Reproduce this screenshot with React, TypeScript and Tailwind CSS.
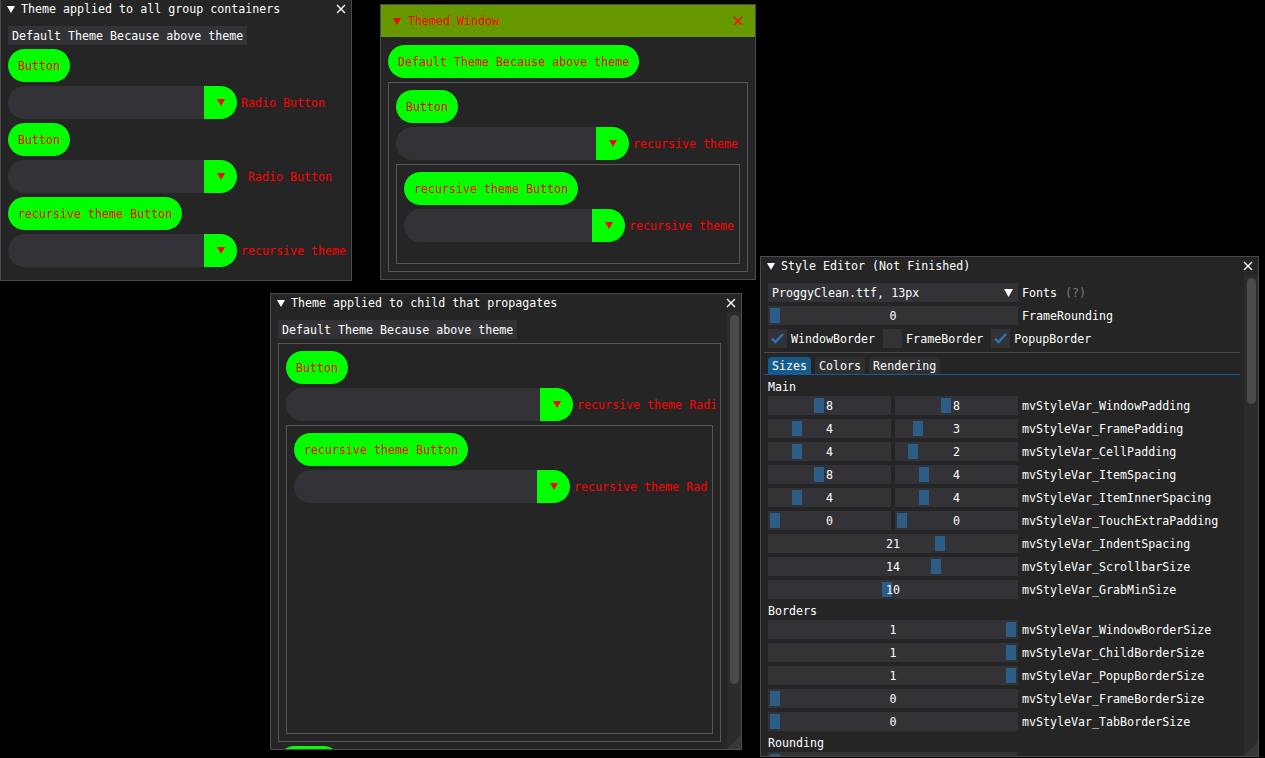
import React from 'react';

const Tri = ({ c = '#ffffff', w = 8, h = 7 }: { c?: string; w?: number; h?: number }) => (
  <svg width={w} height={h} viewBox={`0 0 ${w} ${h}`} className="shrink-0">
    <polygon points={`0,0 ${w},0 ${w / 2},${h}`} fill={c} />
  </svg>
);

const Close = ({ c = '#ffffff' }: { c?: string }) => (
  <svg width="10" height="10" viewBox="0 0 10 10" className="shrink-0">
    <path d="M1 1L9 9M9 1L1 9" stroke={c} strokeWidth="1.4" />
  </svg>
);

const Check = () => (
  <svg width="19" height="19" viewBox="0 0 19 19">
    <path d="M4 9.5L7.5 13L15 5" stroke="#2a74b4" strokeWidth="2.4" fill="none" />
  </svg>
);

function Win({ cls, title, themed, children }: { cls: string; title: string; themed?: boolean; children: React.ReactNode }) {
  return (
    <div className={`absolute flex flex-col overflow-hidden bg-[#252526] border border-[#4a4a4e] ${cls}`}>
      {themed ? (
        <div className="h-[32px] shrink-0 bg-[#669900] flex items-center pl-[12px] pr-[12px] text-[#ff0000]">
          <Tri c="#ff0000" />
          <span className="ml-[7px]">{title}</span>
          <span className="ml-auto">
            <Close c="#ff0000" />
          </span>
        </div>
      ) : (
        <div className="h-[18px] shrink-0 flex items-center pl-[6px] pr-[5px] text-white">
          <Tri />
          <span className="ml-[6px]">{title}</span>
          <span className="ml-auto">
            <Close />
          </span>
        </div>
      )}
      {children}
    </div>
  );
}

function Label({ text }: { text: string }) {
  return (
    <div className="h-[19px] px-[4px] shrink-0 self-start bg-[#333337] text-white flex items-center whitespace-pre">
      <span className="translate-y-[1px]">{text}</span>
    </div>
  );
}

function GBtn({ text }: { text: string }) {
  return (
    <div className="h-[33px] px-[10px] shrink-0 self-start rounded-full bg-[#00ff00] text-[#ff0000] flex items-center whitespace-pre">
      <span className="translate-y-[1px]">{text}</span>
    </div>
  );
}

function GCombo({ w, label }: { w: string; label: string }) {
  return (
    <div className="flex items-center shrink-0 whitespace-pre">
      <div className={`flex h-[33px] shrink-0 ${w}`}>
        <div className="flex-1 bg-[#333337] rounded-l-full" />
        <div className="w-[33px] bg-[#00ff00] rounded-r-full flex items-center justify-center">
          <Tri c="#ff0000" w={8} h={7} />
        </div>
      </div>
      <span className="ml-[4px] text-[#ff0000] translate-y-[1px]">{label}</span>
    </div>
  );
}

// child window: border box, content clipped a little inside the right edge
function Child({ cls, children }: { cls: string; children: React.ReactNode }) {
  return (
    <div className={`shrink-0 border border-[#56565a] flex pl-[7px] pt-[7px] pr-[4px] ${cls}`}>
      <div className="flex-1 min-w-0 overflow-hidden flex flex-col gap-[4px]">{children}</div>
    </div>
  );
}

function Scroll({ grab }: { grab: string }) {
  return (
    <div className="relative w-[14px] shrink-0 bg-[#2c2c2f] pt-[3px] pl-[3px] pr-[2px]">
      <div className={`w-[9px] rounded-full bg-[#4a4a4d] ${grab}`} />
    </div>
  );
}

function Grip() {
  return (
    <svg width="14" height="14" viewBox="0 0 14 14" className="absolute right-0 bottom-0">
      <polygon points="14,0 14,14 0,14" fill="#37373b" />
    </svg>
  );
}

function Slider({ w, grab, value }: { w: string; grab: number; value: string }) {
  return (
    <div className={`relative h-[19px] shrink-0 bg-[#333337] flex items-center justify-center ${w}`}>
      <div className="absolute top-[2px] w-[10px] h-[15px] bg-[#2c5d87]" style={{ left: grab }} />
      <span className="relative text-white translate-y-[1px]">{value}</span>
    </div>
  );
}

const pairs: { name: string; a: [number, string]; b: [number, string] }[] = [
  { name: 'mvStyleVar_WindowPadding', a: [46, '8'], b: [46, '8'] },
  { name: 'mvStyleVar_FramePadding', a: [24, '4'], b: [18, '3'] },
  { name: 'mvStyleVar_CellPadding', a: [24, '4'], b: [13, '2'] },
  { name: 'mvStyleVar_ItemSpacing', a: [46, '8'], b: [24, '4'] },
  { name: 'mvStyleVar_ItemInnerSpacing', a: [24, '4'], b: [24, '4'] },
  { name: 'mvStyleVar_TouchExtraPadding', a: [2, '0'], b: [2, '0'] },
];

const singles: { name: string; grab: number; value: string }[] = [
  { name: 'mvStyleVar_IndentSpacing', grab: 167, value: '21' },
  { name: 'mvStyleVar_ScrollbarSize', grab: 163, value: '14' },
  { name: 'mvStyleVar_GrabMinSize', grab: 114, value: '10' },
];

const borders: { name: string; grab: number; value: string }[] = [
  { name: 'mvStyleVar_WindowBorderSize', grab: 238, value: '1' },
  { name: 'mvStyleVar_ChildBorderSize', grab: 238, value: '1' },
  { name: 'mvStyleVar_PopupBorderSize', grab: 238, value: '1' },
  { name: 'mvStyleVar_FrameBorderSize', grab: 2, value: '0' },
  { name: 'mvStyleVar_TabBorderSize', grab: 2, value: '0' },
];

function SingleRow({ r }: { r: { name: string; grab: number; value: string } }) {
  return (
    <div className="flex items-center gap-[4px] h-[19px] shrink-0 whitespace-pre">
      <Slider w="w-[250px]" grab={r.grab} value={r.value} />
      <span className="text-white translate-y-[1px]">{r.name}</span>
    </div>
  );
}

export default function App() {
  return (
    <div className="relative w-[1265px] h-[758px] overflow-hidden bg-black font-['DejaVu_Sans_Mono',monospace] text-[11.65px] leading-[13px]">
      {/* group containers */}
      <Win cls="left-0 top-[-1px] w-[352px] h-[282px]" title="Theme applied to all group containers">
        <div className="flex-1 flex flex-col gap-[4px] pl-[7px] pt-[8px] overflow-hidden">
          <Label text="Default Theme Because above theme" />
          <GBtn text="Button" />
          <GCombo w="w-[229px]" label="Radio Button" />
          <GBtn text="Button" />
          <GCombo w="w-[229px]" label=" Radio Button" />
          <GBtn text="recursive theme Button" />
          <GCombo w="w-[229px]" label="recursive theme" />
        </div>
      </Win>

      {/* themed window */}
      <Win cls="left-[380px] top-[4px] w-[376px] h-[276px]" title="Themed Window" themed>
        <div className="flex-1 flex flex-col gap-[4px] pl-[7px] pt-[8px] overflow-hidden">
          <GBtn text="Default Theme Because above theme" />
          <Child cls="w-[360px] h-[190px]">
            <GBtn text="Button" />
            <GCombo w="w-[233px]" label="recursive theme" />
            <Child cls="w-[344px] h-[100px]">
              <GBtn text="recursive theme Button" />
              <GCombo w="w-[221px]" label="recursive theme" />
            </Child>
          </Child>
        </div>
      </Win>

      {/* child that propagates */}
      <Win cls="left-[270px] top-[293px] w-[472px] h-[457px]" title="Theme applied to child that propagates">
        <div className="flex flex-1 min-h-0">
          <div className="flex-1 min-w-0 flex flex-col gap-[4px] pl-[7px] pt-[8px] overflow-hidden">
            <Label text="Default Theme Because above theme" />
            <Child cls="w-[443px] h-[399px]">
              <GBtn text="Button" />
              <GCombo w="w-[287px]" label="recursive theme Radio Button" />
              <Child cls="w-[427px] h-[309px]">
                <GBtn text="recursive theme Button" />
                <GCombo w="w-[276px]" label="recursive theme Radio Button" />
              </Child>
            </Child>
            <GBtn text="Button" />
          </div>
          <Scroll grab="h-[369px]" />
        </div>
        <Grip />
      </Win>

      {/* style editor */}
      <Win cls="left-[760px] top-[256px] w-[499px] h-[501px]" title="Style Editor (Not Finished)">
        <div className="flex flex-1 min-h-0">
          <div className="flex-1 min-w-0 flex flex-col gap-[4px] pl-[7px] pr-[8px] pt-[8px] overflow-hidden text-white whitespace-pre">
            <div className="flex items-center h-[19px] shrink-0">
              <div className="w-[250px] h-[19px] bg-[#333337] flex items-center pl-[4px] pr-[5px]">
                <span className="translate-y-[1px]">ProggyClean.ttf, 13px</span>
                <span className="ml-auto">
                  <Tri w={9} h={8} />
                </span>
              </div>
              <span className="ml-[4px] translate-y-[1px]">Fonts</span>
              <span className="ml-[8px] text-[#7a7a7a] translate-y-[1px]">(?)</span>
            </div>
            <div className="flex items-center gap-[4px] h-[19px] shrink-0">
              <Slider w="w-[250px]" grab={2} value="0" />
              <span className="translate-y-[1px]">FrameRounding</span>
            </div>
            <div className="flex items-center h-[19px] shrink-0">
              <div className="w-[19px] h-[19px] bg-[#333337]">
                <Check />
              </div>
              <span className="ml-[4px] translate-y-[1px]">WindowBorder</span>
              <div className="ml-[8px] w-[19px] h-[19px] bg-[#333337]" />
              <span className="ml-[4px] translate-y-[1px]">FrameBorder</span>
              <div className="ml-[8px] w-[19px] h-[19px] bg-[#333337]">
                <Check />
              </div>
              <span className="ml-[4px] translate-y-[1px]">PopupBorder</span>
            </div>
            <div className="h-[1px] shrink-0 bg-[#4a4a4e] -mx-[4px]" />
            <div className="flex gap-[4px] shrink-0 -mx-[4px] px-[4px] border-b border-[#155b8e]">
              <div className="h-[17px] px-[4px] rounded-t-[4px] bg-[#155b8e] flex items-center">
                <span className="translate-y-[1px]">Sizes</span>
              </div>
              <div className="h-[17px] px-[4px] rounded-t-[4px] bg-[#303033] flex items-center">
                <span className="translate-y-[1px]">Colors</span>
              </div>
              <div className="h-[17px] px-[4px] rounded-t-[4px] bg-[#303033] flex items-center">
                <span className="translate-y-[1px]">Rendering</span>
              </div>
            </div>
            <div className="h-[13px] shrink-0 translate-y-[2px]">Main</div>
            {pairs.map((r) => (
              <div key={r.name} className="flex items-center gap-[4px] h-[19px] shrink-0">
                <Slider w="w-[123px]" grab={r.a[0]} value={r.a[1]} />
                <Slider w="w-[123px]" grab={r.b[0]} value={r.b[1]} />
                <span className="translate-y-[1px]">{r.name}</span>
              </div>
            ))}
            {singles.map((r) => (
              <SingleRow key={r.name} r={r} />
            ))}
            <div className="h-[13px] shrink-0 translate-y-[2px]">Borders</div>
            {borders.map((r) => (
              <SingleRow key={r.name} r={r} />
            ))}
            <div className="h-[13px] shrink-0 translate-y-[2px]">Rounding</div>
            <SingleRow r={{ name: 'mvStyleVar_WindowRounding', grab: 2, value: '0' }} />
          </div>
          <Scroll grab="h-[126px]" />
        </div>
        <Grip />
      </Win>
    </div>
  );
}
